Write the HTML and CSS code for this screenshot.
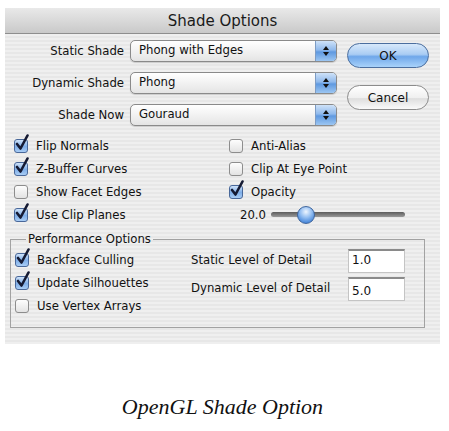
FILE: index.html
```html
<!DOCTYPE html>
<html lang="en">
<head>
  <meta charset="UTF-8">
  <title>Shade Options</title>
  <link rel="stylesheet" href="styles.css">
</head>
<body>
  <div class="dialog">
    <div class="titlebar">Shade Options</div>
    <div class="panel">
      <div class="top">
        <div class="shades">
          <div class="row">
            <span class="lbl">Static Shade</span>
            <div class="popup"><span class="val">Phong with Edges</span><span class="stepper"><svg width="8" height="12" viewBox="0 0 8 12"><path d="M4 1 L7 5 L1 5 Z M4 11 L7 7 L1 7 Z" fill="#111"/></svg></span></div>
          </div>
          <div class="row">
            <span class="lbl">Dynamic Shade</span>
            <div class="popup"><span class="val">Phong</span><span class="stepper"><svg width="8" height="12" viewBox="0 0 8 12"><path d="M4 1 L7 5 L1 5 Z M4 11 L7 7 L1 7 Z" fill="#111"/></svg></span></div>
          </div>
          <div class="row">
            <span class="lbl">Shade Now</span>
            <div class="popup"><span class="val">Gouraud</span><span class="stepper"><svg width="8" height="12" viewBox="0 0 8 12"><path d="M4 1 L7 5 L1 5 Z M4 11 L7 7 L1 7 Z" fill="#111"/></svg></span></div>
          </div>
        </div>
        <div class="buttons">
          <button class="btn btn-default">OK</button>
          <button class="btn">Cancel</button>
        </div>
      </div>

      <div class="checks">
        <div class="col col-left">
          <label class="check"><span class="box on"><svg class="tick" width="16" height="18" viewBox="0 0 16 18"><path d="M3 10 L6.5 14.5 L13.5 1.5" fill="none" stroke="#151a33" stroke-width="2.6" stroke-linecap="round" stroke-linejoin="round"/></svg></span>Flip Normals</label>
          <label class="check"><span class="box on"><svg class="tick" width="16" height="18" viewBox="0 0 16 18"><path d="M3 10 L6.5 14.5 L13.5 1.5" fill="none" stroke="#151a33" stroke-width="2.6" stroke-linecap="round" stroke-linejoin="round"/></svg></span>Z-Buffer Curves</label>
          <label class="check"><span class="box"></span>Show Facet Edges</label>
          <label class="check"><span class="box on"><svg class="tick" width="16" height="18" viewBox="0 0 16 18"><path d="M3 10 L6.5 14.5 L13.5 1.5" fill="none" stroke="#151a33" stroke-width="2.6" stroke-linecap="round" stroke-linejoin="round"/></svg></span>Use Clip Planes</label>
        </div>
        <div class="col">
          <label class="check"><span class="box"></span>Anti-Alias</label>
          <label class="check"><span class="box"></span>Clip At Eye Point</label>
          <label class="check"><span class="box on"><svg class="tick" width="16" height="18" viewBox="0 0 16 18"><path d="M3 10 L6.5 14.5 L13.5 1.5" fill="none" stroke="#151a33" stroke-width="2.6" stroke-linecap="round" stroke-linejoin="round"/></svg></span>Opacity</label>
          <div class="slider-row">
            <span class="slider-val">20.0</span>
            <div class="slider"><span class="track"></span><span class="knob"></span></div>
          </div>
        </div>
      </div>

      <fieldset class="group">
        <legend>Performance Options</legend>
        <div class="group-body">
          <div class="col">
            <label class="check"><span class="box on"><svg class="tick" width="16" height="18" viewBox="0 0 16 18"><path d="M3 10 L6.5 14.5 L13.5 1.5" fill="none" stroke="#151a33" stroke-width="2.6" stroke-linecap="round" stroke-linejoin="round"/></svg></span>Backface Culling</label>
            <label class="check"><span class="box on"><svg class="tick" width="16" height="18" viewBox="0 0 16 18"><path d="M3 10 L6.5 14.5 L13.5 1.5" fill="none" stroke="#151a33" stroke-width="2.6" stroke-linecap="round" stroke-linejoin="round"/></svg></span>Update Silhouettes</label>
            <label class="check"><span class="box"></span>Use Vertex Arrays</label>
          </div>
          <div class="details">
            <span class="detail-lbl">Static Level of Detail</span>
            <input class="field" type="text" value="1.0">
            <span class="detail-lbl">Dynamic Level of Detail</span>
            <input class="field field-low" type="text" value="5.0">
          </div>
        </div>
      </fieldset>
    </div>
  </div>
  <p class="caption">OpenGL Shade Option</p>
</body>
</html>
```

FILE: styles.css
```css
html, body { margin:0; padding:0; background:#fff; }
body { font-family:'DejaVu Sans','Liberation Sans',sans-serif; font-size:11.7px; color:#111; }

.dialog { width:435px; margin:8px 0 0 5px; }
.titlebar { height:25px; line-height:26px; text-align:center; font-size:15px; color:#1a1a1a;
  background:linear-gradient(#e9e9e9, #d6d6d6 60%, #c9c9c9); border-bottom:1px solid #8e8e8e; }
.panel { padding:6px 0 16px; background:repeating-linear-gradient(#efefef 0 2px, #e7e7e7 2px 4px); }

/* popups + buttons */
.top { display:flex; }
.shades { display:flex; flex-direction:column; gap:10px; }
.row { display:flex; align-items:center; height:22px; }
.lbl { width:125px; padding-right:6px; box-sizing:border-box; text-align:right; }
.popup { width:207px; height:22px; box-sizing:border-box; display:flex; align-items:stretch;
  border:1px solid #8a8a8a; border-radius:5px; overflow:hidden;
  background:linear-gradient(#ffffff, #f2f2f2 50%, #e4e4e4); box-shadow:0 1px 1px rgba(0,0,0,0.15); }
.val { flex:1; padding-left:8px; line-height:19px; }
.stepper { width:20px; display:flex; align-items:center; justify-content:center;
  background:linear-gradient(#cfe2f8, #8fb9ec 45%, #5f99e0 55%, #9cc6f2); border-left:1px solid #7d9cc4; }

.buttons { display:flex; flex-direction:column; gap:17px; margin-left:10px; padding-top:3px; }
.btn { width:82px; height:25px; border-radius:13px; font:12px 'DejaVu Sans',sans-serif; color:#111;
  border:1px solid #8c8c8c; background:linear-gradient(#ffffff, #f0f0f0 50%, #dedede 55%, #fafafa); padding:0; }
.btn-default { border-color:#4b6e9e;
  background:linear-gradient(#d8e9fb, #a9ccf3 45%, #6fa7ea 55%, #a8d2fa); }

/* checkboxes */
.checks { display:grid; grid-template-columns:224px 1fr; margin-top:8px; }
.col-left { padding-left:9px; }
.col { display:flex; flex-direction:column; }
.check { display:flex; align-items:center; height:23px; }
.box { position:relative; width:14px; height:14px; box-sizing:border-box; margin-right:8px;
  border:1px solid #8d8d8d; border-radius:3px; background:linear-gradient(#fdfdfd, #e3e3e3); }
.box.on { border-color:#49689a; background:linear-gradient(#cfe3fa, #7faee8 55%, #a9cdf5); }
.tick { position:absolute; left:-1px; top:-6px; }

.slider-row { display:flex; align-items:center; height:23px; padding-left:11px; }
.slider-val { width:31px; }
.slider { position:relative; width:134px; height:20px; display:flex; align-items:center; }
.track { width:100%; height:5px; border-radius:3px; background:linear-gradient(#5c5c5c, #9a9a9a); }
.knob { position:absolute; left:26px; top:1px; width:18px; height:18px; box-sizing:border-box; border-radius:50%;
  border:1px solid #3f659c; background:radial-gradient(circle at 50% 30%, #eef6ff, #8dbaf0 45%, #3d7fd6 85%); }

/* group box */
.group { margin:6px 15px 0 5px; padding:1px 0 10px 4px; border:1px solid #a2a2a2; }
.group legend { margin-left:11px; padding:0 2px; line-height:15px; }
.group-body { display:flex; }
.group-body .col { width:176px; }
.details { display:grid; grid-template-columns:157px 57px; row-gap:4px; align-content:start; padding-top:1px; }
.detail-lbl { line-height:22px; }
.field { width:57px; height:24px; box-sizing:border-box; margin:0; padding:0 0 3px 3px;
  font:12px 'DejaVu Sans',sans-serif; color:#111; background:#fff;
  border:1px solid #c4c4c4; border-top:2px solid #8a8a8a; }
.field-low { padding:3px 0 0 3px; }

.caption { width:435px; margin:51px 0 0 5px; text-align:center;
  font:italic 22px 'Liberation Serif',serif; line-height:24px; color:#111; }
```
